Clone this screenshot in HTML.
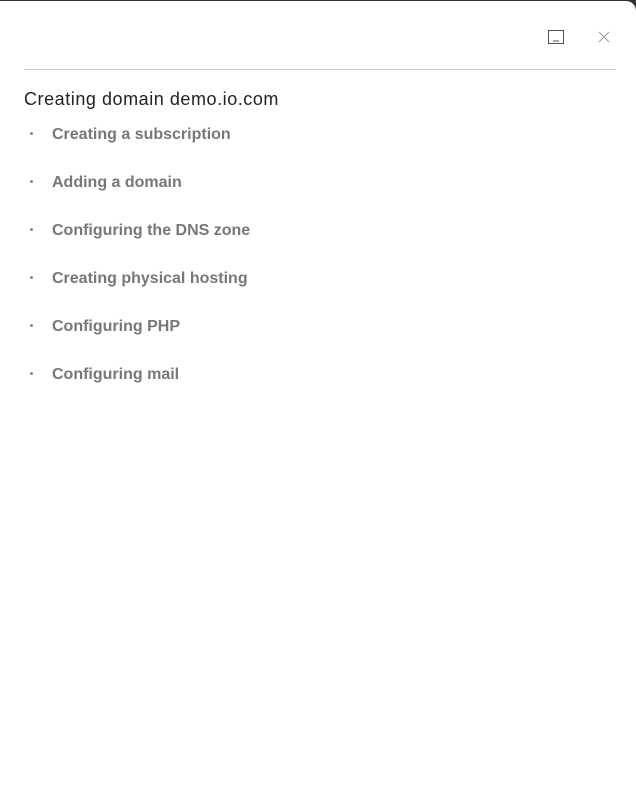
<!DOCTYPE html>
<html><head><style>
html,body{margin:0;padding:0;width:636px;height:788px;background:#333;overflow:hidden}
.p{position:absolute;left:0;top:1px;width:636px;height:787px;background:#fff;border-top-right-radius:10px;font-family:"Liberation Sans",sans-serif}
.hr{position:absolute;left:24px;top:68px;width:592px;height:1px;background:#ccc}
.t{position:absolute;left:24px;top:88px;font-size:18px;color:#222;letter-spacing:0.55px}
.i{position:absolute;left:52px;font-size:16px;font-weight:bold;color:#777;letter-spacing:0px}
.b{position:absolute;left:30px;width:3px;height:3px;border-radius:50%;background:#888}
</style></head><body><div class="p">
<svg style="position:absolute;left:548px;top:29px" width="16" height="15"><rect x="0.5" y="0.5" width="15" height="13" fill="none" stroke="#555"/><line x1="5" y1="11" x2="11" y2="11" stroke="#555"/></svg>
<svg style="position:absolute;left:598px;top:30px" width="12" height="12"><path d="M1 1L11 11M11 1L1 11" stroke="#999" stroke-width="1"/></svg>
<div class="hr"></div>
<div class="t">Creating domain demo.io.com</div>
<div class="b" style="top:131px"></div><div class="i" style="top:125px">Creating a subscription</div>
<div class="b" style="top:179px"></div><div class="i" style="top:173px">Adding a domain</div>
<div class="b" style="top:227px"></div><div class="i" style="top:221px">Configuring the DNS zone</div>
<div class="b" style="top:275px"></div><div class="i" style="top:269px">Creating physical hosting</div>
<div class="b" style="top:323px"></div><div class="i" style="top:317px">Configuring PHP</div>
<div class="b" style="top:371px"></div><div class="i" style="top:365px">Configuring mail</div>
</div></body></html>
